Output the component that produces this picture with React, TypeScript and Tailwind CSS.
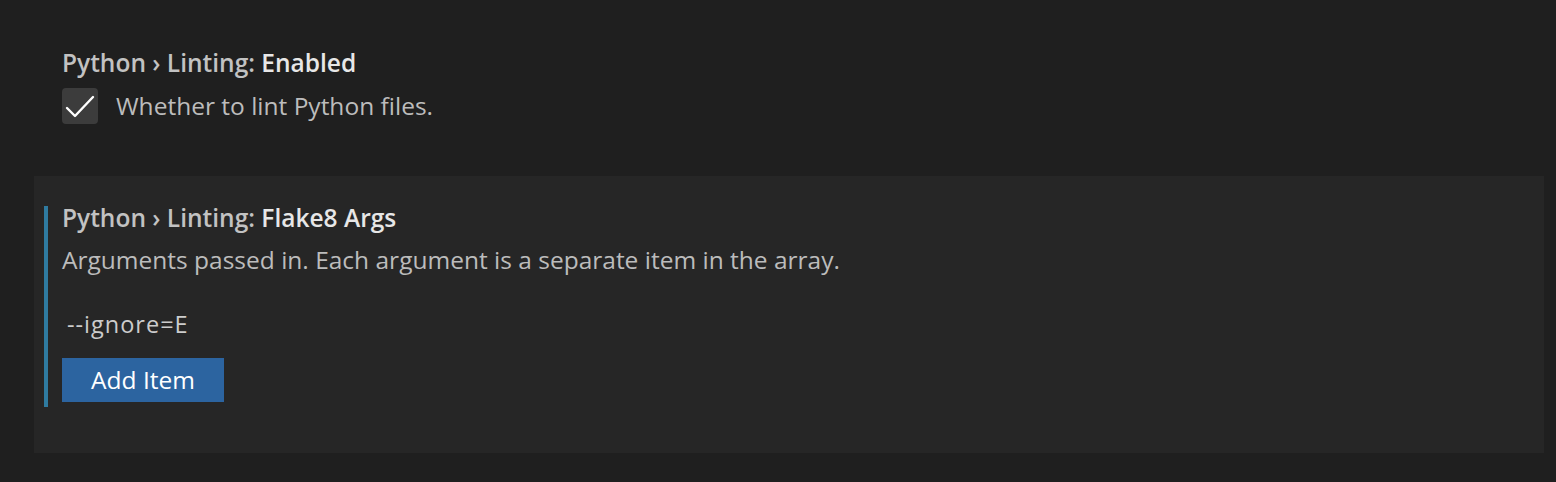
const font = { fontFamily: '"Open Sans", "Noto Sans", sans-serif' };

function Title({ prefix, name, lead }: { prefix: string; name: string; lead: string }) {
  return (
    <div className={`text-[24.5px] font-semibold ${lead}`}>
      <span className="text-[#c2c2c2]">{prefix}</span>
      <span className="text-[#e7e7e7]">{name}</span>
    </div>
  );
}

export default function App() {
  return (
    <div className="h-[482px] overflow-hidden bg-[#1f1f1f] pl-[34px] pr-[12px] pt-[47px]" style={font}>
      <div className="pl-[28px]">
        <Title prefix="Python › Linting: " name="Enabled" lead="leading-[32px]" />
        <div className="mt-[9px] flex items-center gap-[18px]">
          <span className="flex h-[36px] w-[36px] items-center justify-center rounded-[4px] bg-[#3c3c3c]">
            <svg width="36" height="36" viewBox="0 0 36 36" fill="none">
              <path d="M5 20 L13 28 L31 9" stroke="#ffffff" strokeWidth="2.4" strokeLinecap="round" strokeLinejoin="round" />
            </svg>
          </span>
          <span className="text-[24.5px] leading-[32px] text-[#bcbcbc]">Whether to lint Python files.</span>
        </div>
      </div>

      <div className="mt-[52px] h-[277px] bg-[#262626] pl-[10px] pt-[30px]">
        <div className="border-l-4 border-[#2f7ba0] pl-[14px] pb-[5px]">
          <Title prefix="Python › Linting: " name="Flake8 Args" lead="leading-[24px]" />
          <div className="mt-[14px] text-[24.5px] leading-[32px] text-[#bcbcbc]">
            Arguments passed in. Each argument is a separate item in the array.
          </div>
          <div className="mt-[33px] pl-[5px] text-[23.5px] leading-[30px] tracking-[1px] text-[#cccccc]">--ignore=E</div>
          <button className="mt-[19px] flex h-[44px] w-[162px] items-center justify-center bg-[#2c64a0] text-[24.5px] leading-[32px] text-white">
            Add Item
          </button>
        </div>
      </div>
    </div>
  );
}
